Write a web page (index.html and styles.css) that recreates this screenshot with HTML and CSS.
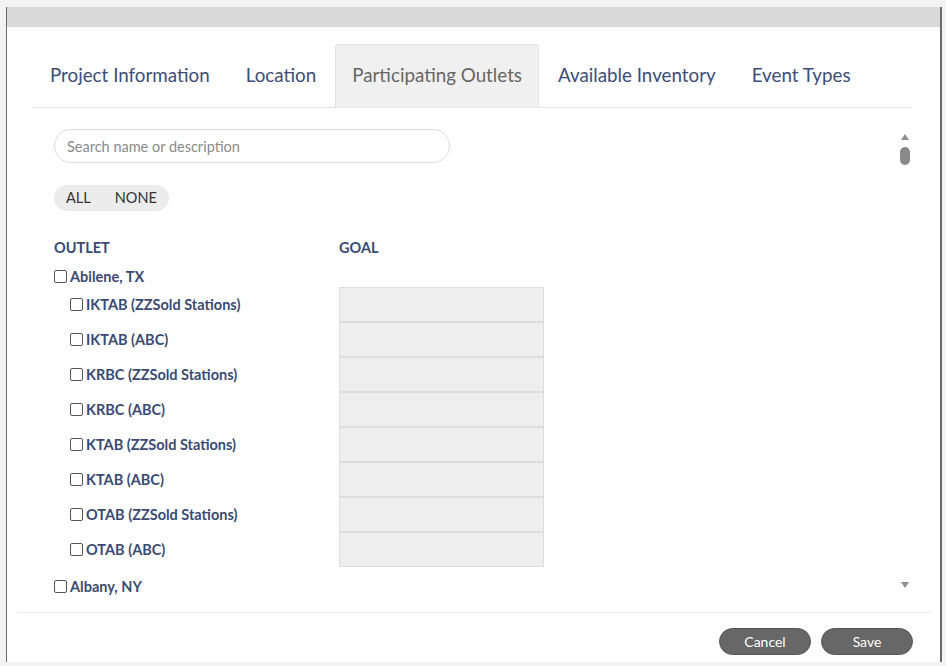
FILE: index.html
```html
<!DOCTYPE html>
<html>
<head>
<meta charset="utf-8">
<link rel="stylesheet" href="styles.css">
</head>
<body>
<div class="top-strip"></div>
<div class="window">
  <div class="titlebar"></div>
  <div class="content">
    <nav class="tabs">
      <span class="tab">Project Information</span>
      <span class="tab">Location</span>
      <span class="tab active">Participating Outlets</span>
      <span class="tab">Available Inventory</span>
      <span class="tab">Event Types</span>
    </nav>
    <div class="pane">
      <div class="list">
        <input class="search" type="text" placeholder="Search name or description">
        <div class="pill-row"><div class="pill"><span>ALL</span><span>NONE</span></div></div>
        <div class="grid">
          <div class="col-head">OUTLET</div>
          <div class="col-head">GOAL</div>
          <label class="market"><span class="cb"></span>Abilene, TX</label>
          <label class="station"><span class="cb"></span>IKTAB (ZZSold Stations)</label><div class="goal"></div>
          <label class="station"><span class="cb"></span>IKTAB (ABC)</label><div class="goal"></div>
          <label class="station"><span class="cb"></span>KRBC (ZZSold Stations)</label><div class="goal"></div>
          <label class="station"><span class="cb"></span>KRBC (ABC)</label><div class="goal"></div>
          <label class="station"><span class="cb"></span>KTAB (ZZSold Stations)</label><div class="goal"></div>
          <label class="station"><span class="cb"></span>KTAB (ABC)</label><div class="goal"></div>
          <label class="station"><span class="cb"></span>OTAB (ZZSold Stations)</label><div class="goal"></div>
          <label class="station"><span class="cb"></span>OTAB (ABC)</label><div class="goal"></div>
          <label class="market last"><span class="cb"></span>Albany, NY</label>
        </div>
      </div>
      <div class="scrollbar">
        <span class="arrow up"></span>
        <span class="thumb"></span>
        <span class="track"></span>
        <span class="arrow down"></span>
      </div>
    </div>
  </div>
  <div class="footer">
    <button class="btn">Cancel</button>
    <button class="btn">Save</button>
  </div>
</div>
</body>
</html>
```
FILE: styles.css
```css
* { box-sizing: border-box; }
html, body {
  margin: 0;
  padding: 0;
  background: #f3f3f3;
  font-family: Lato, "Open Sans", sans-serif;
}
.top-strip { height: 7px; }
.window {
  margin-left: 6px;
  width: 936px;
  height: 655px;
  background: #fff;
  border-left: 1px solid #6a6a6a;
  border-right: 2px solid #6a6a6a;
  display: flex;
  flex-direction: column;
}
.titlebar {
  height: 20px;
  background: #d9d9d9;
  flex: none;
}
.content {
  padding: 17px 27px 0 26px;
}
.tabs {
  display: flex;
  height: 64px;
  border-bottom: 1px solid #e6e6e6;
}
.tab {
  height: 63px;
  line-height: 60px;
  padding: 0 16px;
  margin-right: 2px;
  font-size: 18.8px;
  color: #3d4d77;
  white-space: nowrap;
  border: 1px solid transparent;
  border-bottom: none;
  border-radius: 3px 3px 0 0;
}
.tab.active {
  background: #f0f0f0;
  border-color: #e2e2e2;
  color: #666;
}
.pane {
  display: flex;
  height: 492px;
}
.list {
  flex: 1;
  padding-left: 21px;
}
.search {
  display: block;
  margin-top: 21px;
  width: 396px;
  height: 34px;
  border: 1px solid #dcdcdc;
  border-radius: 17px;
  padding: 0 12px;
  font-family: Lato, sans-serif;
  font-size: 14.5px;
  color: #333;
  outline: none;
}
.search::placeholder { color: #8a8a8a; }
.pill-row { margin-top: 22px; display: flex; }
.pill {
  display: flex;
  gap: 24px;
  height: 26px;
  line-height: 26px;
  padding: 0 12px;
  background: #ececec;
  border-radius: 13px;
  font-size: 14.5px;
  color: #333;
}
.grid {
  margin-top: 29px;
  display: grid;
  grid-template-columns: 285px 205px;
}
.col-head {
  height: 16px;
  line-height: 16px;
  font-size: 14.5px;
  font-weight: 700;
  color: #3b4a72;
}
.market, .station {
  display: flex;
  align-items: center;
  font-size: 14.5px;
  font-weight: 700;
  color: #3b4a72;
  white-space: nowrap;
}
.market {
  grid-column: 1 / span 2;
  height: 22px;
  margin-top: 9px;
}
.market.last { margin-top: 8px; }
.station {
  height: 35px;
  padding-left: 16px;
}
.cb {
  width: 13px;
  height: 13px;
  border: 1px solid #555;
  border-radius: 2px;
  background: #fff;
  margin-right: 3px;
  flex: none;
}
.goal {
  height: 35px;
  background: #eeeeee;
  border: 1px solid #dddddd;
  width: 205px;
}
.scrollbar {
  width: 16px;
  display: flex;
  flex-direction: column;
  align-items: center;
  padding: 26px 0 12px;
}
.arrow {
  width: 0;
  height: 0;
  border-left: 4.5px solid transparent;
  border-right: 4.5px solid transparent;
}
.arrow.up { border-bottom: 6px solid #8f8f8f; }
.arrow.down { border-top: 6px solid #8f8f8f; }
.thumb {
  margin-top: 7px;
  width: 10px;
  height: 18px;
  border-radius: 5px;
  background: #8a8a8a;
}
.track { flex: 1; }
.footer {
  margin: 12px 10px 0;
  border-top: 1px solid #ececec;
  padding: 15px 17px 0 0;
  display: flex;
  justify-content: flex-end;
  gap: 10px;
}
.btn {
  width: 92px;
  height: 27px;
  border-radius: 14px;
  border: 1px solid #555;
  background: #676767;
  color: #fff;
  font-family: Lato, sans-serif;
  font-size: 14px;
  padding: 0;
}
```
